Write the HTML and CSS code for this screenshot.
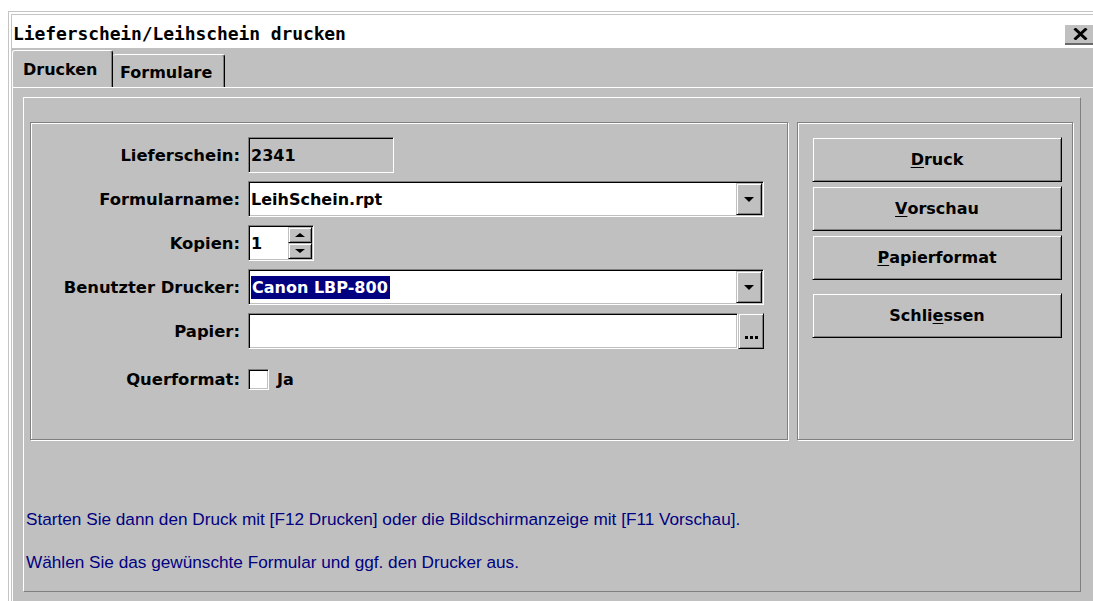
FILE: index.html
```html
<!DOCTYPE html>
<html lang="de">
<head>
<meta charset="utf-8">
<title>Lieferschein/Leihschein drucken</title>
<link rel="stylesheet" href="styles.css">
</head>
<body>
<div class="window">
  <div class="frame">
    <div class="titlebar">
      <span class="title">Lieferschein/Leihschein drucken</span>
      <span class="close" title="Schliessen">
        <svg width="15" height="12" viewBox="0 0 15 12" aria-hidden="true">
          <path d="M1.5 0.5 L13.5 11.5 M13.5 0.5 L1.5 11.5" stroke="#000" stroke-width="3" fill="none"/>
        </svg>
      </span>
    </div>
    <div class="dialog">
      <div class="tabs">
        <div class="tab active">Drucken</div>
        <div class="tab">Formulare</div>
      </div>
      <div class="tabpanel">
        <div class="panel">
          <div class="groups">
            <div class="group form">
              <div class="grid">
                <label class="lbl">Lieferschein:</label>
                <div class="field readonly w-short"><span class="val">2341</span></div>

                <label class="lbl">Formularname:</label>
                <div class="field w-long">
                  <span class="val">LeihSchein.rpt</span>
                  <span class="dropbtn"><i class="arrow-down"></i></span>
                </div>

                <label class="lbl">Kopien:</label>
                <div class="field spin">
                  <span class="val">1</span>
                  <span class="spinbtns">
                    <span class="spinbtn"><i class="arrow-up sm"></i></span>
                    <span class="spinbtn"><i class="arrow-down sm"></i></span>
                  </span>
                </div>

                <label class="lbl">Benutzter Drucker:</label>
                <div class="field w-long">
                  <span class="val selected">Canon LBP-800</span>
                  <span class="dropbtn"><i class="arrow-down"></i></span>
                </div>

                <label class="lbl">Papier:</label>
                <div class="picker">
                  <div class="field w-paper"></div>
                  <span class="ellipsis">
                    <svg width="13" height="3" viewBox="0 0 13 3" aria-hidden="true">
                      <rect x="0" y="0" width="3" height="3" fill="#000"/>
                      <rect x="5" y="0" width="3" height="3" fill="#000"/>
                      <rect x="10" y="0" width="3" height="3" fill="#000"/>
                    </svg>
                  </span>
                </div>

                <label class="lbl">Querformat:</label>
                <div class="checkrow">
                  <span class="check"></span>
                  <span>Ja</span>
                </div>
              </div>
            </div>
            <div class="group actions">
              <button class="btn"><u>D</u>ruck</button>
              <button class="btn"><u>V</u>orschau</button>
              <button class="btn"><u>P</u>apierformat</button>
              <button class="btn gap">Schli<u>e</u>ssen</button>
            </div>
          </div>
          <div class="hints">
            <p>Starten Sie dann den Druck mit [F12 Drucken] oder die Bildschirmanzeige mit [F11 Vorschau].</p>
            <p class="second">Wählen Sie das gewünschte Formular und ggf. den Drucker aus.</p>
          </div>
        </div>
      </div>
    </div>
  </div>
</div>
</body>
</html>
```

FILE: styles.css
```css
html, body {
  margin: 0;
  padding: 0;
  background: #fff;
  overflow: hidden;
}

body {
  font-family: "DejaVu Sans", "Liberation Sans", sans-serif;
  font-size: 16px;
  font-weight: bold;
  color: #000;
}

/* outer window with double light frame */
.window {
  margin: 11px 0 0 8px;
  width: 1085px;
  height: 590px;
  box-sizing: border-box;
  border-top: 1px solid #c4c4c4;
  border-left: 1px solid #c4c4c4;
  padding: 2px 0 0 2px;
  background: #fff;
  display: flex;
  flex-direction: column;
}

.frame {
  flex: 1;
  border-top: 1px solid #c4c4c4;
  border-left: 1px solid #c4c4c4;
  display: flex;
  flex-direction: column;
}

.titlebar {
  height: 33px;
  flex: none;
  background: #fff;
  display: flex;
  align-items: flex-start;
}

.title {
  font-family: "DejaVu Sans Mono", "Liberation Mono", monospace;
  font-size: 18px;
  font-weight: bold;
  line-height: 20px;
  margin: 9px 0 0 1px;
  letter-spacing: -0.1px;
}

.close {
  margin: 10px 0 0 auto;
  width: 26px;
  height: 18px;
  background: #c0c0c0;
  border-bottom: 2px solid #6a6a6a;
  display: flex;
  align-items: center;
  justify-content: center;
  padding-left: 2px;
  box-sizing: content-box;
}

/* dialog body */
.dialog {
  flex: 1;
  background: #c0c0c0;
  display: flex;
  flex-direction: column;
}

.tabs {
  height: 39px;
  flex: none;
  display: flex;
  align-items: flex-end;
}

.tab {
  box-sizing: border-box;
  display: flex;
  align-items: center;
  border-top: 1px solid #fff;
  border-right: 1px solid #000;
  border-radius: 3px 3px 0 0;
  box-shadow: inset -1px 0 0 #808080;
}

.tab.active {
  width: 101px;
  height: 37px;
  padding-left: 10px;
  border-left: 1px solid #fff;
}

.tab:not(.active) {
  width: 112px;
  height: 33px;
  padding-left: 7px;
  padding-top: 2px;
}

.tabpanel {
  flex: 1;
  border-top: 1px solid #fff;
  border-left: 1px solid #fff;
  padding: 9px 0 0 10px;
}

.panel {
  width: 1058px;
  height: 495px;
  box-sizing: border-box;
  border: 1px solid;
  border-color: #fff #808080 #808080 #fff;
  padding-top: 24px;
}

.groups {
  display: flex;
  gap: 9px;
  margin-left: 6px;
}

/* etched group frame */
.group {
  height: 318px;
  box-sizing: border-box;
  border: 1px solid #808080;
  box-shadow: inset 1px 1px 0 #fff, 1px 1px 0 #fff;
}

.group.form {
  width: 758px;
  padding-top: 14px;
}

.group.actions {
  width: 276px;
  padding: 14px 0 0 14px;
  display: flex;
  flex-direction: column;
  gap: 4px;
}

.grid {
  display: grid;
  grid-template-columns: 209px auto;
  grid-template-rows: repeat(5, 36px) 44px;
  column-gap: 8px;
  row-gap: 8px;
  align-items: center;
  justify-items: start;
}

.lbl {
  justify-self: end;
  white-space: nowrap;
  font-size: 16.4px;
}

/* sunken input field */
.field {
  box-sizing: border-box;
  height: 36px;
  border: 1px solid;
  border-color: #808080 #fff #fff #808080;
  box-shadow: inset 1px 1px 0 #000, inset -1px -1px 0 #c0c0c0;
  background: #fff;
  padding: 1px;
  display: flex;
  align-items: center;
}

.field.readonly {
  background: #c0c0c0;
}

.w-short { width: 146px; }
.w-long { width: 516px; }
.w-paper { width: 490px; }

.val {
  padding-left: 1px;
  white-space: nowrap;
}

.val.selected {
  margin-left: 1px;
  padding: 0 2px 0 1px;
  background: #000080;
  color: #fff;
  line-height: 23px;
}

/* raised 3d buttons */
.dropbtn,
.spinbtn,
.ellipsis,
.btn {
  box-sizing: border-box;
  background: #c0c0c0;
  border: 1px solid;
  border-color: #c0c0c0 #000 #000 #c0c0c0;
  box-shadow: inset 1px 1px 0 #fff, inset -1px -1px 0 #808080;
}

.dropbtn {
  margin-left: auto;
  width: 26px;
  height: 32px;
  display: flex;
  align-items: center;
  justify-content: center;
}

.arrow-down,
.arrow-up {
  display: block;
  width: 0;
  height: 0;
  border-left: 5px solid transparent;
  border-right: 5px solid transparent;
}

.arrow-down { border-top: 5px solid #000; }
.arrow-up { border-bottom: 5px solid #000; }

.arrow-down.sm,
.arrow-up.sm {
  border-left-width: 5px;
  border-right-width: 5px;
}

.arrow-down.sm { border-top-width: 4px; }
.arrow-up.sm { border-bottom-width: 4px; }

.field.spin {
  width: 66px;
}

.spinbtns {
  margin-left: auto;
  display: flex;
  flex-direction: column;
  width: 24px;
  height: 32px;
}

.spinbtn {
  flex: 1;
  display: flex;
  align-items: center;
  justify-content: center;
}

.picker {
  display: flex;
}

.ellipsis {
  width: 26px;
  height: 36px;
  display: flex;
  align-items: flex-end;
  justify-content: center;
  padding-bottom: 9px;
}

.ellipsis svg { display: block; }

.checkrow {
  display: flex;
  align-items: center;
  gap: 8px;
}

.check {
  box-sizing: border-box;
  width: 21px;
  height: 21px;
  border: 1px solid;
  border-color: #808080 #fff #fff #808080;
  box-shadow: inset 1px 1px 0 #000, inset -1px -1px 0 #c0c0c0;
  background: #fff;
}

.btn {
  width: 250px;
  height: 45px;
  padding: 0;
  font-family: inherit;
  font-size: 16px;
  font-weight: bold;
  color: #000;
  display: flex;
  align-items: center;
  justify-content: center;
}

.btn u {
  text-underline-offset: 2px;
}

.btn.gap {
  margin-top: 9px;
}

/* status hints under the groups */
.hints {
  margin: 69px 0 0 2px;
  font-family: "Liberation Sans", Arial, sans-serif;
  font-weight: normal;
  font-size: 17.2px;
  line-height: 20px;
  color: #000080;
}

.hints p {
  margin: 0;
}

.hints p.second {
  margin-top: 23px;
}
```
